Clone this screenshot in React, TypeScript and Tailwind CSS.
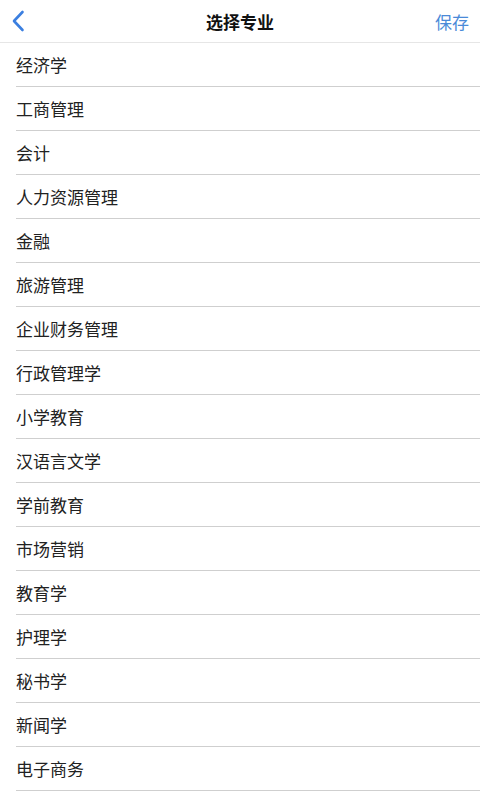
import React from "react";

const majors = [
  "经济学",
  "工商管理",
  "会计",
  "人力资源管理",
  "金融",
  "旅游管理",
  "企业财务管理",
  "行政管理学",
  "小学教育",
  "汉语言文学",
  "学前教育",
  "市场营销",
  "教育学",
  "护理学",
  "秘书学",
  "新闻学",
  "电子商务",
];

export default function App() {
  return (
    <div
      className="w-[480px] h-[800px] overflow-hidden bg-white"
      style={{ fontFamily: '"Noto Sans CJK SC", "Noto Sans", sans-serif' }}
    >
      <header className="relative flex h-[43px] items-center justify-center border-b border-[#e6e6e6]">
        <button className="absolute left-[6px] top-[6px] flex h-[30px] w-[24px] items-center justify-center">
          <svg width="16" height="22" viewBox="0 0 16 22" fill="none">
            <path
              d="M12.5 2 L4 11 L12.5 20"
              stroke="#3b7fe0"
              strokeWidth="2.6"
              strokeLinecap="round"
              strokeLinejoin="round"
            />
          </svg>
        </button>
        <h1 className="text-[17px] font-bold leading-none text-[#111]">选择专业</h1>
        <button className="absolute right-[11px] top-[12px] text-[17px] leading-[20px] text-[#4a8ad8]">
          保存
        </button>
      </header>
      <ul>
        {majors.map((m) => (
          <li key={m} className="ml-4 flex h-[44px] items-center border-b border-[#cfcfcf] text-[17px] text-[#222]">
            {m}
          </li>
        ))}
      </ul>
    </div>
  );
}
